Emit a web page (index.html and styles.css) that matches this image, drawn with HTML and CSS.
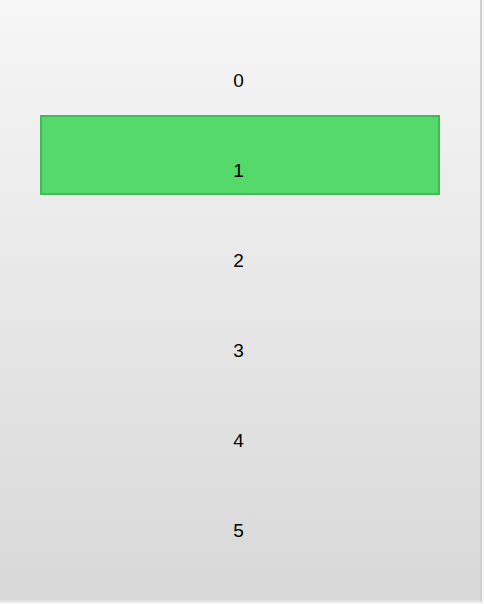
FILE: index.html
```html
<!DOCTYPE html>
<html>
<head>
<meta charset="utf-8">
<link rel="stylesheet" href="styles.css">
</head>
<body>
<div class="list">
  <div class="item"><span class="label">0</span></div>
  <div class="item selected"><span class="label">1</span></div>
  <div class="item"><span class="label">2</span></div>
  <div class="item"><span class="label">3</span></div>
  <div class="item"><span class="label">4</span></div>
  <div class="item"><span class="label">5</span></div>
</div>
</body>
</html>
```

FILE: styles.css
```css
html, body {
  margin: 0;
  padding: 0;
  background: #f4f4f4;
}
.list {
  box-sizing: border-box;
  width: 482px;
  height: 602px;
  padding: 25px 40px 0 40px;
  display: flex;
  flex-direction: column;
  gap: 10px;
  background: linear-gradient(to bottom, #f6f6f6, #d8d8d8);
  border-right: 2px solid #d0d0d0;
  border-bottom: 2px solid #e2e2e2;
  font-family: "Liberation Sans", Arial, sans-serif;
  font-size: 19px;
  color: #000;
}
.item {
  box-sizing: border-box;
  height: 80px;
  padding-top: 46px;
  line-height: 19px;
  text-align: center;
}
.label {
  display: inline-block;
  margin-right: 3px;
}
.selected {
  background: #55d96b;
  border: 2px solid #45b958;
  padding-top: 44px;
}
```
